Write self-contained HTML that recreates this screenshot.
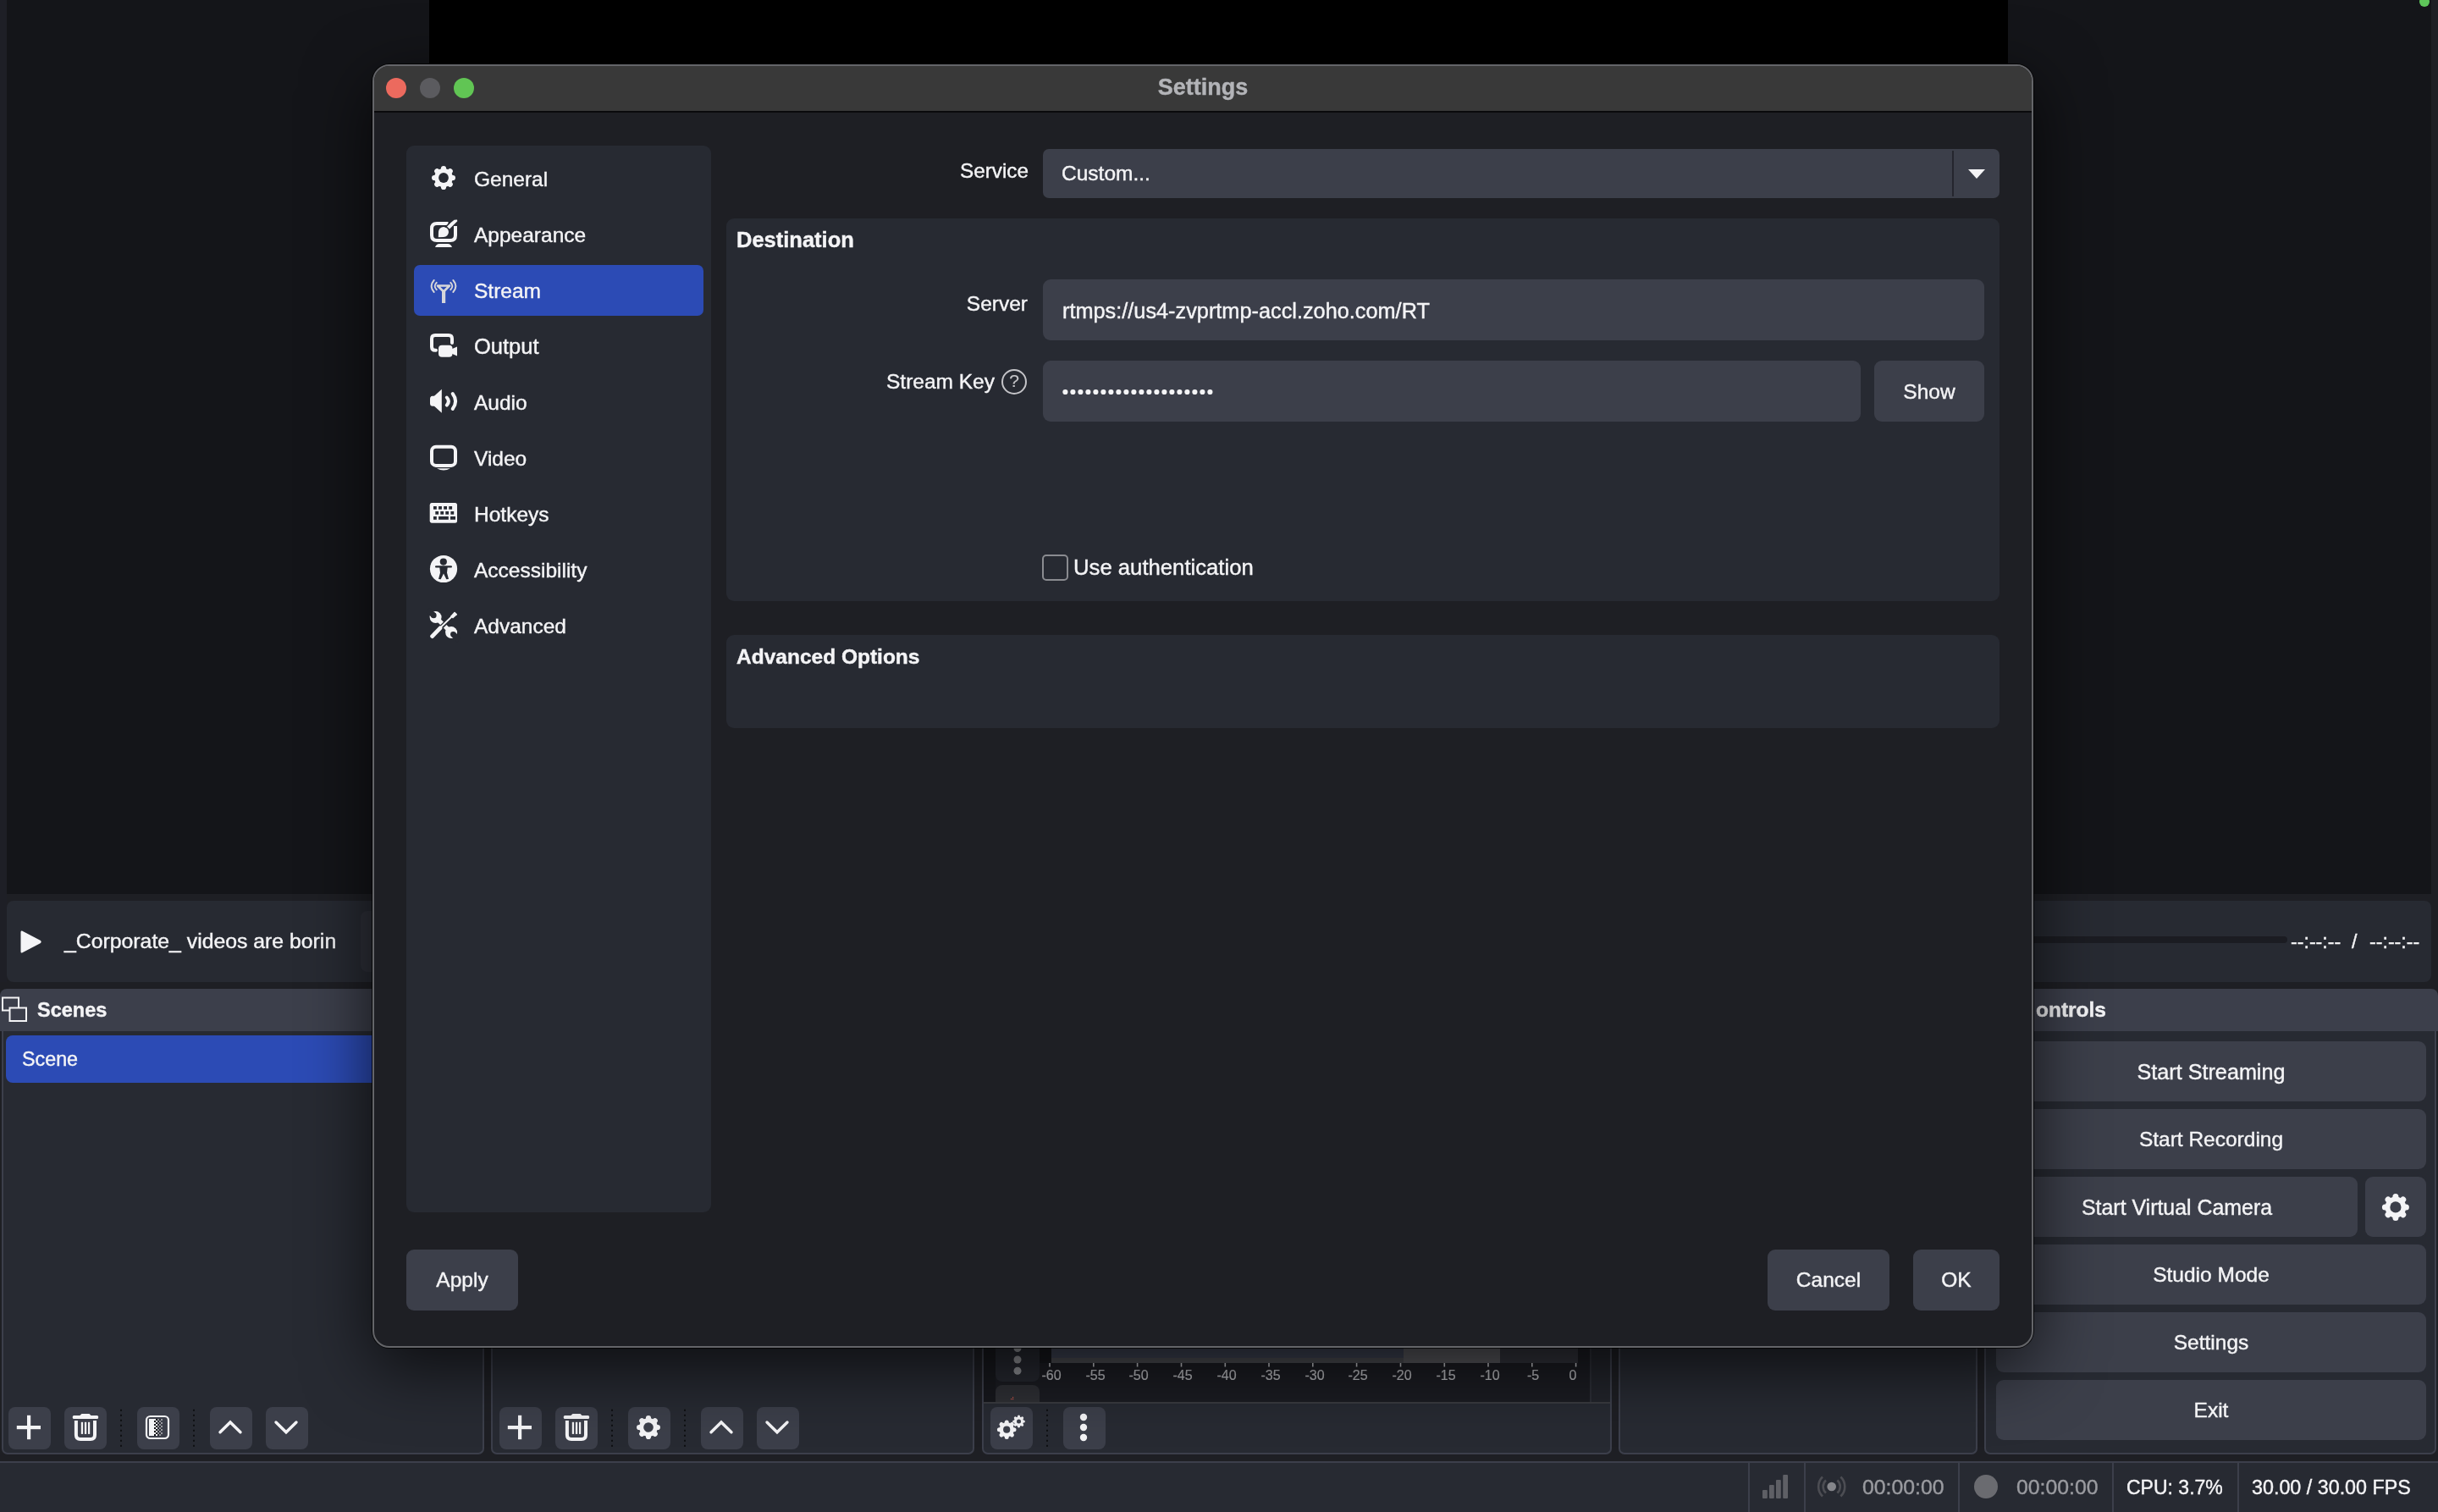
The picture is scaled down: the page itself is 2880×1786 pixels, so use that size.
<!DOCTYPE html>
<html><head><meta charset="utf-8">
<style>
html,body{margin:0;padding:0}
body{width:2880px;height:1786px;overflow:hidden;position:relative;background:#1e1f24;font-family:"Liberation Sans",sans-serif;color:#f4f4f6}
.a{position:absolute;box-sizing:border-box}
.t{position:absolute;white-space:pre;line-height:1;font-size:24.5px;-webkit-text-stroke:0.4px currentColor;will-change:transform}
.b{font-weight:bold}
.btn{position:absolute;background:#3c3f4a;border-radius:9px}
.tb{position:absolute;background:#3c3f4a;border-radius:8px;width:50px;height:50px}
svg{position:absolute;overflow:visible}
</style></head><body>

<!-- ============ BACKGROUND OBS WINDOW ============ -->
<div class="a" style="left:0;top:0;width:8px;height:1160px;background:#1e1f26"></div>
<div class="a" style="left:8px;top:0;width:2864px;height:1056px;background:#141519"></div>
<div class="a" style="left:507px;top:0;width:1865px;height:600px;background:#000"></div>
<div class="a" style="left:2864px;top:0;width:8px;height:10px"><div class="a" style="left:-6px;top:-4px;width:12px;height:12px;border-radius:50%;background:#5ec55a"></div></div>

<!-- media bar -->
<div class="a" style="left:8px;top:1064px;width:2864px;height:96px;background:#272a32;border-radius:8px"></div>
<svg style="left:24px;top:1098px" width="26" height="29" viewBox="0 0 26 29"><path d="M2 1.5 L24 13 Q25.5 14.5 24 16 L2 27.5 Q0.5 28 0.5 26 L0.5 3 Q0.5 1 2 1.5Z" fill="#f4f4f6"/></svg>
<div class="t" style="left:75.5px;top:1100px;font-size:24.8px">_Corporate_ videos are borin</div>
<div class="a" style="left:2300px;top:1106px;width:402px;height:8px;background:#1b1c22;border-radius:4px"></div>
<div class="a" style="left:426px;top:1076px;width:120px;height:72px;background:#2e3039;border-radius:8px"></div>
<div class="t" style="left:2706px;top:1101px;font-size:23.2px">--:--:--</div><div class="t" style="left:2777.5px;top:1101px;font-size:23.2px">/</div><div class="t" style="left:2799px;top:1101px;font-size:23.2px">--:--:--</div>

<!-- Scenes dock -->
<div class="a" style="left:0;top:1168px;width:572px;height:50px;background:#3c3f4b;border-radius:8px 8px 0 0"></div>
<div class="a" style="left:2px;top:1218px;width:570px;height:500px;background:#272a32;border:2px solid #3c3f4b;border-top:none;border-radius:0 0 7px 7px"></div>
<svg style="left:1px;top:1176px" width="32" height="32" viewBox="0 0 32 32"><rect x="2" y="2.5" width="19" height="15" fill="none" stroke="#f4f4f6" stroke-width="2"/><rect x="10.5" y="14.5" width="19.5" height="15.5" fill="#3c3f4b" stroke="#f4f4f6" stroke-width="2"/></svg>
<div class="t b" style="left:44px;top:1182px;font-size:23.5px">Scenes</div>
<div class="a" style="left:7px;top:1223px;width:565px;height:56px;background:#2c4bb5;border-radius:8px 0 0 8px"></div>
<div class="t" style="left:26px;top:1240px;font-size:23.3px">Scene</div>

<!-- scenes toolbar -->
<div class="tb" style="left:10px;top:1662px"></div>
<div class="tb" style="left:76px;top:1662px"></div>
<div class="tb" style="left:162px;top:1662px"></div>
<div class="tb" style="left:248px;top:1662px"></div>
<div class="tb" style="left:314px;top:1662px"></div>

<!-- Sources dock -->
<div class="a" style="left:580px;top:1218px;width:571px;height:500px;background:#272a32;border:2px solid #3c3f4b;border-top:none;border-radius:0 0 7px 7px"></div>
<div class="tb" style="left:590px;top:1662px"></div>
<div class="tb" style="left:656px;top:1662px"></div>
<div class="tb" style="left:742px;top:1662px"></div>
<div class="tb" style="left:828px;top:1662px"></div>
<div class="tb" style="left:894px;top:1662px"></div>

<!-- Mixer dock -->
<div class="a" style="left:1160px;top:1218px;width:744px;height:500px;background:#272a32;border:2px solid #3c3f4b;border-top:none;border-radius:0 0 7px 7px"></div>
<div class="tb" style="left:1170px;top:1662px"></div>
<div class="tb" style="left:1256px;top:1662px"></div>


<!-- mixer top -->
<div class="a" style="left:1162px;top:1300px;width:716px;height:356px;background:#1b1c22"></div>
<div class="a" style="left:1878px;top:1300px;width:24px;height:356px;background:#22242b;border-left:2px solid #2c2e36"></div>
<div class="a" style="left:1162px;top:1300px;width:14px;height:356px;background:#17181d"></div>
<div class="a" style="left:1176px;top:1300px;width:52px;height:332px;background:#25272f;border-radius:8px"></div>
<div class="a" style="left:1176px;top:1636px;width:52px;height:20px;background:#2e2f34;border-radius:8px 8px 0 0"></div>
<div class="a" style="left:1228px;top:1300px;width:14px;height:310px;background:#16171c"></div>
<div class="a" style="left:1242px;top:1300px;width:416px;height:304px;background:#3d4252"></div>
<div class="a" style="left:1242px;top:1604px;width:416px;height:6px;background:#4a4b50"></div>
<div class="a" style="left:1658px;top:1300px;width:114px;height:310px;background:#58585d"></div>
<div class="a" style="left:1772px;top:1300px;width:92px;height:310px;background:#32333b"></div>
<div class="a" style="left:1162px;top:1656px;width:740px;height:2px;background:#3a3b40"></div>
<svg style="left:0;top:0" width="2880" height="1786" viewBox="0 0 2880 1786">
 <g fill="#c0c1c5"><rect x="1239.2" y="1610" width="1.6" height="4.5"/><rect x="1291.0" y="1610" width="1.6" height="4.5"/><rect x="1342.8" y="1610" width="1.6" height="4.5"/><rect x="1394.7" y="1610" width="1.6" height="4.5"/><rect x="1446.5" y="1610" width="1.6" height="4.5"/><rect x="1498.2" y="1610" width="1.6" height="4.5"/><rect x="1550.0" y="1610" width="1.6" height="4.5"/><rect x="1601.8" y="1610" width="1.6" height="4.5"/><rect x="1653.7" y="1610" width="1.6" height="4.5"/><rect x="1705.5" y="1610" width="1.6" height="4.5"/><rect x="1757.2" y="1610" width="1.6" height="4.5"/><rect x="1809.0" y="1610" width="1.6" height="4.5"/><rect x="1860.8" y="1610" width="1.6" height="4.5"/></g>
 <circle cx="1202" cy="1592.5" r="4.5" fill="#8e8f94"/><circle cx="1202" cy="1606" r="4.5" fill="#8e8f94"/><circle cx="1202" cy="1619.2" r="4.5" fill="#8e8f94"/>
 <g fill="#d0584c"><rect x="1194" y="1652" width="1.2" height="1.2"/><rect x="1196" y="1650" width="1.2" height="1.2"/><rect x="1196" y="1652" width="1.2" height="1.2"/></g>
</svg>


<div class="t" style="left:1211.8px;top:1617px;width:60px;text-align:center;font-size:16px;color:#b8b9bd;-webkit-text-stroke:0.2px #b8b9bd">-60</div><div class="t" style="left:1263.6px;top:1617px;width:60px;text-align:center;font-size:16px;color:#b8b9bd;-webkit-text-stroke:0.2px #b8b9bd">-55</div><div class="t" style="left:1315.4px;top:1617px;width:60px;text-align:center;font-size:16px;color:#b8b9bd;-webkit-text-stroke:0.2px #b8b9bd">-50</div><div class="t" style="left:1367.2px;top:1617px;width:60px;text-align:center;font-size:16px;color:#b8b9bd;-webkit-text-stroke:0.2px #b8b9bd">-45</div><div class="t" style="left:1419.0px;top:1617px;width:60px;text-align:center;font-size:16px;color:#b8b9bd;-webkit-text-stroke:0.2px #b8b9bd">-40</div><div class="t" style="left:1470.8px;top:1617px;width:60px;text-align:center;font-size:16px;color:#b8b9bd;-webkit-text-stroke:0.2px #b8b9bd">-35</div><div class="t" style="left:1522.6px;top:1617px;width:60px;text-align:center;font-size:16px;color:#b8b9bd;-webkit-text-stroke:0.2px #b8b9bd">-30</div><div class="t" style="left:1574.4px;top:1617px;width:60px;text-align:center;font-size:16px;color:#b8b9bd;-webkit-text-stroke:0.2px #b8b9bd">-25</div><div class="t" style="left:1626.2px;top:1617px;width:60px;text-align:center;font-size:16px;color:#b8b9bd;-webkit-text-stroke:0.2px #b8b9bd">-20</div><div class="t" style="left:1678.0px;top:1617px;width:60px;text-align:center;font-size:16px;color:#b8b9bd;-webkit-text-stroke:0.2px #b8b9bd">-15</div><div class="t" style="left:1729.8px;top:1617px;width:60px;text-align:center;font-size:16px;color:#b8b9bd;-webkit-text-stroke:0.2px #b8b9bd">-10</div><div class="t" style="left:1780.6px;top:1617px;width:60px;text-align:center;font-size:16px;color:#b8b9bd;-webkit-text-stroke:0.2px #b8b9bd">-5</div><div class="t" style="left:1828.1px;top:1617px;width:60px;text-align:center;font-size:16px;color:#b8b9bd;-webkit-text-stroke:0.2px #b8b9bd">0</div>
<!-- Transitions dock -->
<div class="a" style="left:1912px;top:1218px;width:424px;height:500px;background:#272a32;border:2px solid #3c3f4b;border-top:none;border-radius:0 0 7px 7px"></div>

<!-- Controls dock -->
<div class="a" style="left:2344px;top:1168px;width:536px;height:50px;background:#3c3f4b;border-radius:8px 8px 0 0"></div>
<div class="a" style="left:2344px;top:1218px;width:534px;height:500px;background:#272a32;border:2px solid #3c3f4b;border-top:none;border-radius:0 0 7px 7px"></div>
<div class="t b" style="left:2300px;top:1181px;font-size:24.5px;width:188px;text-align:right">ontrols</div>
<div class="btn" style="left:2358px;top:1230px;width:508px;height:71px"></div>
<div class="btn" style="left:2358px;top:1310px;width:508px;height:71px"></div>
<div class="btn" style="left:2358px;top:1390px;width:427px;height:71px"></div>
<div class="btn" style="left:2794px;top:1390px;width:72px;height:71px"></div>
<div class="btn" style="left:2358px;top:1470px;width:508px;height:71px"></div>
<div class="btn" style="left:2358px;top:1550px;width:508px;height:71px"></div>
<div class="btn" style="left:2358px;top:1630px;width:508px;height:71px"></div>
<div class="t" style="left:2358px;top:1254px;width:508px;text-align:center;font-size:25.2px">Start Streaming</div>
<div class="t" style="left:2358px;top:1334px;width:508px;text-align:center">Start Recording</div>
<div class="t" style="left:2358px;top:1414px;width:427px;text-align:center;font-size:24.9px">Start Virtual Camera</div>
<div class="t" style="left:2358px;top:1494px;width:508px;text-align:center">Studio Mode</div>
<div class="t" style="left:2358px;top:1574px;width:508px;text-align:center">Settings</div>
<div class="t" style="left:2358px;top:1654px;width:508px;text-align:center">Exit</div>

<!-- status bar -->
<div class="a" style="left:0;top:1726px;width:2880px;height:60px;background:#272a32;border-top:2px solid #3c3f4b"></div>
<div class="a" style="left:2064.5px;top:1728px;width:2px;height:58px;background:#3c3f4b"></div>
<div class="a" style="left:2131px;top:1728px;width:2px;height:58px;background:#3c3f4b"></div>
<div class="a" style="left:2313px;top:1728px;width:2px;height:58px;background:#3c3f4b"></div>
<div class="a" style="left:2495px;top:1728px;width:2px;height:58px;background:#3c3f4b"></div>
<div class="a" style="left:2643px;top:1728px;width:2px;height:58px;background:#3c3f4b"></div>
<div class="t" style="left:2199.5px;top:1745px;font-size:24.8px;color:#9a9ba0">00:00:00</div>
<div class="a" style="left:2332px;top:1742px;width:28px;height:28px;border-radius:50%;background:#6a6b70"></div>
<div class="t" style="left:2382px;top:1745px;font-size:24.8px;color:#9a9ba0">00:00:00</div>
<div class="t" style="left:2512px;top:1746px;font-size:23px">CPU: 3.7%</div>
<div class="t" style="left:2660px;top:1746px;font-size:23.3px">30.00 / 30.00 FPS</div>


<svg style="left:0;top:0" width="2880" height="1786" viewBox="0 0 2880 1786">
 <g fill="#f4f4f6">
  <rect x="19.8" y="1684" width="28.2" height="4.2"/><rect x="32" y="1671.8" width="4.2" height="28.4"/><rect x="85.8" y="1672" width="30.3" height="4.1" rx="1.5"/><path d="M93.8,1672.5 L96.5,1670 L105.5,1670 L108,1672.5Z"/><path d="M89.9,1678 L89.9,1695 Q89.9,1700 94.9,1700 L107,1700 Q112,1700 112,1695 L112,1678" fill="none" stroke="#f4f4f6" stroke-width="4"/><rect x="95.8" y="1679.8" width="2.3" height="14.1"/><rect x="99.9" y="1679.8" width="2.3" height="14.1"/><rect x="104" y="1679.8" width="2.2" height="14.1"/><path d="M260,1691.8 L272,1680 L284,1691.8" fill="none" stroke="#f4f4f6" stroke-width="3.4" stroke-linecap="round"/><path d="M326,1680 L338,1691.8 L350,1680" fill="none" stroke="#f4f4f6" stroke-width="3.4" stroke-linecap="round"/>
  <rect x="173" y="1673" width="26" height="26" rx="4.5" fill="none" stroke="#f4f4f6" stroke-width="2.2"/><rect x="176" y="1676" width="6" height="20"/><rect x="182" y="1676" width="2" height="2" fill="#f4f4f6"/><rect x="182" y="1678" width="2" height="2" fill="#101116"/><rect x="182" y="1680" width="2" height="2" fill="#f4f4f6"/><rect x="182" y="1682" width="2" height="2" fill="#101116"/><rect x="182" y="1684" width="2" height="2" fill="#f4f4f6"/><rect x="182" y="1686" width="2" height="2" fill="#101116"/><rect x="182" y="1688" width="2" height="2" fill="#f4f4f6"/><rect x="182" y="1690" width="2" height="2" fill="#101116"/><rect x="182" y="1692" width="2" height="2" fill="#f4f4f6"/><rect x="182" y="1694" width="2" height="2" fill="#101116"/><rect x="184" y="1676" width="2" height="2" fill="#101116"/><rect x="184" y="1678" width="2" height="2" fill="#f4f4f6"/><rect x="184" y="1680" width="2" height="2" fill="#101116"/><rect x="184" y="1682" width="2" height="2" fill="#f4f4f6"/><rect x="184" y="1684" width="2" height="2" fill="#101116"/><rect x="184" y="1686" width="2" height="2" fill="#f4f4f6"/><rect x="184" y="1688" width="2" height="2" fill="#101116"/><rect x="184" y="1690" width="2" height="2" fill="#f4f4f6"/><rect x="184" y="1692" width="2" height="2" fill="#101116"/><rect x="184" y="1694" width="2" height="2" fill="#f4f4f6"/><rect x="186" y="1676" width="2" height="2" fill="#8e8f94"/><rect x="186" y="1678" width="2" height="2" fill="#2a2c36"/><rect x="186" y="1680" width="2" height="2" fill="#8e8f94"/><rect x="186" y="1682" width="2" height="2" fill="#2a2c36"/><rect x="186" y="1684" width="2" height="2" fill="#8e8f94"/><rect x="186" y="1686" width="2" height="2" fill="#2a2c36"/><rect x="186" y="1688" width="2" height="2" fill="#8e8f94"/><rect x="186" y="1690" width="2" height="2" fill="#2a2c36"/><rect x="186" y="1692" width="2" height="2" fill="#8e8f94"/><rect x="186" y="1694" width="2" height="2" fill="#2a2c36"/><rect x="188" y="1676" width="2" height="2" fill="#2a2c36"/><rect x="188" y="1678" width="2" height="2" fill="#8e8f94"/><rect x="188" y="1680" width="2" height="2" fill="#2a2c36"/><rect x="188" y="1682" width="2" height="2" fill="#8e8f94"/><rect x="188" y="1684" width="2" height="2" fill="#2a2c36"/><rect x="188" y="1686" width="2" height="2" fill="#8e8f94"/><rect x="188" y="1688" width="2" height="2" fill="#2a2c36"/><rect x="188" y="1690" width="2" height="2" fill="#8e8f94"/><rect x="188" y="1692" width="2" height="2" fill="#2a2c36"/><rect x="188" y="1694" width="2" height="2" fill="#8e8f94"/><rect x="190" y="1676" width="2" height="2" fill="#9a9ba0"/><rect x="190" y="1680" width="2" height="2" fill="#9a9ba0"/><rect x="190" y="1684" width="2" height="2" fill="#9a9ba0"/><rect x="190" y="1688" width="2" height="2" fill="#9a9ba0"/><rect x="190" y="1692" width="2" height="2" fill="#9a9ba0"/>
  <rect x="599.8" y="1684" width="28.2" height="4.2"/><rect x="612" y="1671.8" width="4.2" height="28.4"/><rect x="665.8" y="1672" width="30.3" height="4.1" rx="1.5"/><path d="M673.8,1672.5 L676.5,1670 L685.5,1670 L688,1672.5Z"/><path d="M669.9,1678 L669.9,1695 Q669.9,1700 674.9,1700 L687,1700 Q692,1700 692,1695 L692,1678" fill="none" stroke="#f4f4f6" stroke-width="4"/><rect x="675.8" y="1679.8" width="2.3" height="14.1"/><rect x="679.9" y="1679.8" width="2.3" height="14.1"/><rect x="684" y="1679.8" width="2.2" height="14.1"/><path d="M840,1691.8 L852,1680 L864,1691.8" fill="none" stroke="#f4f4f6" stroke-width="3.4" stroke-linecap="round"/><path d="M906,1680 L918,1691.8 L930,1680" fill="none" stroke="#f4f4f6" stroke-width="3.4" stroke-linecap="round"/>
  <circle cx="766" cy="1686" r="10.9" fill="#f4f4f6"/><path d="M766.00,1686.00 L766.00,1675.10 M766.00,1686.00 L773.71,1678.29 M766.00,1686.00 L776.90,1686.00 M766.00,1686.00 L773.71,1693.71 M766.00,1686.00 L766.00,1696.90 M766.00,1686.00 L758.29,1693.71 M766.00,1686.00 L755.10,1686.00 M766.00,1686.00 L758.29,1678.29 " stroke="#f4f4f6" stroke-width="6.2" stroke-linecap="round" fill="none"/><circle cx="766" cy="1686" r="5.8" fill="#3c3f4a"/>
  <circle cx="1189.2" cy="1688.7" r="8.7" fill="#f4f4f6"/><path d="M1189.20,1688.70 L1189.20,1679.90 M1189.20,1688.70 L1195.42,1682.48 M1189.20,1688.70 L1198.00,1688.70 M1189.20,1688.70 L1195.42,1694.92 M1189.20,1688.70 L1189.20,1697.50 M1189.20,1688.70 L1182.98,1694.92 M1189.20,1688.70 L1180.40,1688.70 M1189.20,1688.70 L1182.98,1682.48 " stroke="#f4f4f6" stroke-width="5" stroke-linecap="round" fill="none"/><circle cx="1189.2" cy="1688.7" r="4.1" fill="#3c3f4a"/>
  <circle cx="1203.5" cy="1679" r="5.6" fill="#f4f4f6"/><path d="M1203.50,1679.00 L1203.50,1673.20 M1203.50,1679.00 L1207.60,1674.90 M1203.50,1679.00 L1209.30,1679.00 M1203.50,1679.00 L1207.60,1683.10 M1203.50,1679.00 L1203.50,1684.80 M1203.50,1679.00 L1199.40,1683.10 M1203.50,1679.00 L1197.70,1679.00 M1203.50,1679.00 L1199.40,1674.90 " stroke="#f4f4f6" stroke-width="3.2" stroke-linecap="round" fill="none"/><circle cx="1203.5" cy="1679" r="2.5" fill="#3c3f4a"/>
  <circle cx="1280" cy="1674" r="4.2"/><circle cx="1280" cy="1686" r="4.2"/><circle cx="1280" cy="1698" r="4.2"/>
  <circle cx="2829.9" cy="1425.9" r="12.4" fill="#f4f4f6"/><path d="M2829.90,1425.90 L2829.90,1413.40 M2829.90,1425.90 L2838.74,1417.06 M2829.90,1425.90 L2842.40,1425.90 M2829.90,1425.90 L2838.74,1434.74 M2829.90,1425.90 L2829.90,1438.40 M2829.90,1425.90 L2821.06,1434.74 M2829.90,1425.90 L2817.40,1425.90 M2829.90,1425.90 L2821.06,1417.06 " stroke="#f4f4f6" stroke-width="7" stroke-linecap="round" fill="none"/><circle cx="2829.9" cy="1425.9" r="6.6" fill="#3c3f4a"/>
 </g>
 <g fill="#0e0f12"><rect x="142" y="1664.8" width="2" height="2"/><rect x="142" y="1670.8" width="2" height="2"/><rect x="142" y="1676.8" width="2" height="2"/><rect x="142" y="1682.8" width="2" height="2"/><rect x="142" y="1688.8" width="2" height="2"/><rect x="142" y="1694.8" width="2" height="2"/><rect x="142" y="1700.8" width="2" height="2"/><rect x="142" y="1706.8" width="2" height="2"/><rect x="228" y="1664.8" width="2" height="2"/><rect x="228" y="1670.8" width="2" height="2"/><rect x="228" y="1676.8" width="2" height="2"/><rect x="228" y="1682.8" width="2" height="2"/><rect x="228" y="1688.8" width="2" height="2"/><rect x="228" y="1694.8" width="2" height="2"/><rect x="228" y="1700.8" width="2" height="2"/><rect x="228" y="1706.8" width="2" height="2"/><rect x="722" y="1664.8" width="2" height="2"/><rect x="722" y="1670.8" width="2" height="2"/><rect x="722" y="1676.8" width="2" height="2"/><rect x="722" y="1682.8" width="2" height="2"/><rect x="722" y="1688.8" width="2" height="2"/><rect x="722" y="1694.8" width="2" height="2"/><rect x="722" y="1700.8" width="2" height="2"/><rect x="722" y="1706.8" width="2" height="2"/><rect x="808" y="1664.8" width="2" height="2"/><rect x="808" y="1670.8" width="2" height="2"/><rect x="808" y="1676.8" width="2" height="2"/><rect x="808" y="1682.8" width="2" height="2"/><rect x="808" y="1688.8" width="2" height="2"/><rect x="808" y="1694.8" width="2" height="2"/><rect x="808" y="1700.8" width="2" height="2"/><rect x="808" y="1706.8" width="2" height="2"/><rect x="1236" y="1664.8" width="2" height="2"/><rect x="1236" y="1670.8" width="2" height="2"/><rect x="1236" y="1676.8" width="2" height="2"/><rect x="1236" y="1682.8" width="2" height="2"/><rect x="1236" y="1688.8" width="2" height="2"/><rect x="1236" y="1694.8" width="2" height="2"/><rect x="1236" y="1700.8" width="2" height="2"/><rect x="1236" y="1706.8" width="2" height="2"/></g>
 <!-- status bar icons -->
 <g fill="#5e5f65">
  <rect x="2082" y="1760" width="5.8" height="10" rx="1"/>
  <rect x="2090" y="1754" width="5.8" height="16" rx="1"/>
  <rect x="2098" y="1748" width="5.8" height="22" rx="1"/>
  <rect x="2106.2" y="1742" width="5.8" height="28" rx="1"/>
 </g>
 <circle cx="2163.7" cy="1756" r="5.3" fill="#85868b"/>
 <g fill="none" stroke="#4c4d53" stroke-width="2.6">
  <path d="M2157,1748.5 A10,10 0 0 0 2157,1763.5"/><path d="M2170.4,1748.5 A10,10 0 0 1 2170.4,1763.5"/>
  <path d="M2153,1744.5 A16,16 0 0 0 2153,1767.5"/><path d="M2174.4,1744.5 A16,16 0 0 1 2174.4,1767.5"/>
 </g>
</svg>

<!-- ============ SETTINGS DIALOG ============ -->
<div class="a" style="left:440px;top:76px;width:1962px;height:1516px;border-radius:20px;background:#1e1f24;border:2px solid #646569;box-shadow:0 0 0 1px rgba(0,0,0,0.75),0 22px 80px 0 rgba(0,0,0,0.7);overflow:hidden">
  <div class="a" style="left:0;top:0;width:1958px;height:55px;background:#393939;border-bottom:2px solid #0a0a0c"></div>
</div>
<div class="a" style="left:456px;top:92px;width:24px;height:24px;border-radius:50%;background:#ec6a5e"></div>
<div class="a" style="left:496px;top:92px;width:24px;height:24px;border-radius:50%;background:#5b5b5f"></div>
<div class="a" style="left:536px;top:92px;width:24px;height:24px;border-radius:50%;background:#61c554"></div>
<div class="t b" style="left:440px;top:90px;width:1962px;text-align:center;font-size:27px;color:#b3b4b8">Settings</div>

<!-- left list -->
<div class="a" style="left:480px;top:172px;width:360px;height:1260px;background:#272a32;border-radius:9px"></div>
<div class="a" style="left:489px;top:313px;width:342px;height:60px;background:#2c4bb5;border-radius:7px"></div>
<div class="t" style="left:560px;top:200px">General</div>
<div class="t" style="left:560px;top:266px">Appearance</div>
<div class="t" style="left:560px;top:332px">Stream</div>
<div class="t" style="left:560px;top:397px;font-size:25.5px;top:396.5px">Output</div>
<div class="t" style="left:560px;top:464px">Audio</div>
<div class="t" style="left:560px;top:530px">Video</div>
<div class="t" style="left:560px;top:596px">Hotkeys</div>
<div class="t" style="left:560px;top:662px">Accessibility</div>
<div class="t" style="left:560px;top:728px">Advanced</div>

<!-- right content -->
<div class="t" style="left:1000px;top:190px;width:215px;text-align:right;font-size:24.3px">Service</div>
<div class="a" style="left:1232px;top:176px;width:1130px;height:58px;background:#3c3f4a;border-radius:7px"></div>
<div class="a" style="left:2306px;top:178px;width:2px;height:54px;background:#25262e"></div>
<svg style="left:2325px;top:200px" width="20" height="12" viewBox="0 0 20 12"><path d="M0 0 L20 0 L10 11Z" fill="#f4f4f6"/></svg>
<div class="t" style="left:1254px;top:193px">Custom...</div>

<div class="a" style="left:858px;top:258px;width:1504px;height:452px;background:#272a32;border-radius:9px"></div>
<div class="t b" style="left:870px;top:270.5px;font-size:25.5px">Destination</div>
<div class="t" style="left:1000px;top:347px;width:214px;text-align:right">Server</div>
<div class="a" style="left:1232px;top:330px;width:1112px;height:72px;background:#3c3f4a;border-radius:9px"></div>
<div class="t" style="left:1254.5px;top:354.5px;font-size:25.3px">rtmps://us4-zvprtmp-accl.zoho.com/RT</div>
<div class="t" style="left:960px;top:439px;width:215px;text-align:right">Stream Key</div>
<div class="a" style="left:1183px;top:436px;width:30px;height:30px;border-radius:50%;border:2px solid #c4c4c8"></div>
<div class="t" style="left:1183px;top:439px;width:30px;text-align:center;font-size:21px;color:#c4c4c8;-webkit-text-stroke:0.2px #c4c4c8">?</div>
<div class="a" style="left:1232px;top:426px;width:966px;height:72px;background:#3c3f4a;border-radius:9px"></div>
<div class="a" style="left:2214px;top:426px;width:130px;height:72px;background:#3c3f4a;border-radius:9px"></div>
<div class="t" style="left:2214px;top:451px;width:130px;text-align:center">Show</div>
<div class="a" style="left:1231px;top:655px;width:31px;height:31px;border:2px solid #8a8b90;border-radius:5px"></div>
<div class="t" style="left:1268px;top:658px;font-size:25.7px">Use authentication</div>

<div class="a" style="left:858px;top:750px;width:1504px;height:110px;background:#272a32;border-radius:9px"></div>
<div class="t b" style="left:870px;top:764px">Advanced Options</div>

<div class="a" style="left:480px;top:1476px;width:132px;height:72px;background:#3c3f4a;border-radius:9px"></div>
<div class="t" style="left:480px;top:1500px;width:132px;text-align:center">Apply</div>
<div class="a" style="left:2088px;top:1476px;width:144px;height:72px;background:#3c3f4a;border-radius:9px"></div>
<div class="t" style="left:2088px;top:1500px;width:144px;text-align:center">Cancel</div>
<div class="a" style="left:2260px;top:1476px;width:102px;height:72px;background:#3c3f4a;border-radius:9px"></div>
<div class="t" style="left:2260px;top:1500px;width:102px;text-align:center">OK</div>


<svg style="left:0;top:0" width="2880" height="1786" viewBox="0 0 2880 1786">
 <g fill="#f4f4f6">
  <circle cx="524" cy="210" r="10.9" fill="#f4f4f6"/><path d="M524.00,210.00 L524.00,199.10 M524.00,210.00 L531.71,202.29 M524.00,210.00 L534.90,210.00 M524.00,210.00 L531.71,217.71 M524.00,210.00 L524.00,220.90 M524.00,210.00 L516.29,217.71 M524.00,210.00 L513.10,210.00 M524.00,210.00 L516.29,202.29 " stroke="#f4f4f6" stroke-width="6.2" stroke-linecap="round" fill="none"/><circle cx="524" cy="210" r="5.9" fill="#272a32"/>
  <!-- appearance -->
  <path d="M529.5,264 L516,264 Q510,264 510,270 L510,278 Q510,284 516,284 L532,284 Q538,284 538,278 L538,267" fill="none" stroke="#f4f4f6" stroke-width="4"/>
  <path d="M514,292 Q515.5,288 519,288 L529,288 Q532.5,288 534,292Z"/>
  <path d="M517.8,280.3 L518,274 A6,6 0 1 1 524,280Z"/>
  <path d="M527.5,267 L531,270.5 L540.3,261.2 L540,259.6 L536.6,259.8Z"/>
  <path d="M526,268.5 L531.5,263" stroke="#272a32" stroke-width="1.6"/>
  <!-- output -->
  <path d="M515,413.8 L514,413.8 Q510,413.8 510,409.8 L510,400 Q510,396 514,396 L530,396 Q534,396 534,400 L534,405" fill="none" stroke="#f4f4f6" stroke-width="4" stroke-linecap="round"/>
  <rect x="518" y="407.8" width="16.5" height="14" rx="4"/>
  <path d="M532,413 L540,409.5 L540,420.5 L532,417Z"/>
  <!-- audio -->
  <rect x="508" y="467.8" width="9" height="12" rx="3"/>
  <path d="M513,467.8 L521.8,459.8 L521.8,487.8 L513,479.8Z"/>
  <path d="M527.8,469.5 Q532,474 527.8,478.6" fill="none" stroke="#f4f4f6" stroke-width="4" stroke-linecap="round"/>
  <path d="M534.7,465 Q541.5,474 534.7,483" fill="none" stroke="#f4f4f6" stroke-width="4" stroke-linecap="round"/>
  <!-- video -->
  <rect x="510" y="527.7" width="28" height="22.2" rx="5" fill="none" stroke="#f4f4f6" stroke-width="4"/>
  <path d="M516,553.3 Q524,557.8 532,553.3Z"/>
  <!-- hotkeys -->
  <rect x="507.7" y="594" width="32.3" height="23.7" rx="2.5"/>
  <g fill="#272a32">
   <rect x="512" y="598" width="3.8" height="3.7"/><rect x="518.1" y="598" width="3.8" height="3.7"/><rect x="524.2" y="598" width="3.8" height="3.7"/><rect x="530.3" y="598" width="3.8" height="3.7"/>
   <rect x="514.3" y="604" width="3.8" height="3.7"/><rect x="520.3" y="604" width="3.8" height="3.7"/><rect x="526.3" y="604" width="3.8" height="3.7"/><rect x="532.4" y="604" width="3.8" height="3.7"/>
   <rect x="512" y="610" width="3.8" height="3.8"/><rect x="518.1" y="610" width="11.7" height="3.8"/><rect x="532" y="610" width="6" height="3.8"/>
  </g>
  <!-- accessibility -->
  <circle cx="524" cy="672" r="16.1"/>
  <g fill="#272a32">
   <circle cx="523.8" cy="663.6" r="4.1"/>
   <rect x="514" y="668.2" width="20" height="2.3" rx="1.1"/>
   <path d="M519.2,669.5 L528.8,669.5 L528,676.5 L530,684 L527.3,684.2 L524,677.5 L520.7,684.2 L518,684 L520,676.5Z"/>
  </g>
  <!-- advanced -->
  <path d="M514.6,729.1 L533.1,747.1" stroke="#f4f4f6" stroke-width="5"/>
  <circle cx="514.6" cy="729.1" r="7"/>
  <circle cx="533.1" cy="747.1" r="7"/>
  <g fill="#272a32" stroke="#272a32">
   <circle cx="512.3" cy="726.9" r="3.3" stroke="none"/>
   <path d="M512.3,726.9 L505.5,720.3" stroke-width="6.6"/>
   <circle cx="535.4" cy="749.3" r="3.3" stroke="none"/>
   <path d="M535.4,749.3 L542.2,755.9" stroke-width="6.6"/>
   <path d="M507,755 L541,721" stroke-width="5"/>
  </g>
  <path d="M510.6,751.6 L520,741.8" stroke="#f4f4f6" stroke-width="4.8" stroke-linecap="round"/>
  <path d="M519,742.5 L533.5,728.5" stroke="#f4f4f6" stroke-width="1.9"/>
  <path d="M532,728 L536.5,723 Q537,722.6 537.5,723 L539.8,725.3 Q540.2,725.8 539.8,726.3 L535,730.5Z"/>
 </g>
 <!-- stream -->
 <g fill="none" stroke="#d6d6da" stroke-linecap="round">
  <path d="M512.7,331 Q506.5,338 512.7,345" stroke-width="1.9"/>
  <path d="M515.8,333.8 Q511.5,338 515.8,342.2" stroke-width="1.9"/>
  <path d="M535.3,331 Q541.5,338 535.3,345" stroke-width="1.9"/>
  <path d="M532.2,333.8 Q536.5,338 532.2,342.2" stroke-width="1.9"/>
  <path d="M517,337.5 L531,337.5 L524,344.5Z" stroke-width="2.6" stroke-linejoin="round"/>
 </g>
 <rect x="522" y="343" width="4.2" height="15" fill="#d6d6da"/>
 <!-- stream key dots -->
 <g fill="#f4f4f6"><circle cx="1258.4" cy="463" r="3.1"/><circle cx="1267.4" cy="463" r="3.1"/><circle cx="1276.4" cy="463" r="3.1"/><circle cx="1285.4" cy="463" r="3.1"/><circle cx="1294.4" cy="463" r="3.1"/><circle cx="1303.4" cy="463" r="3.1"/><circle cx="1312.4" cy="463" r="3.1"/><circle cx="1321.4" cy="463" r="3.1"/><circle cx="1330.4" cy="463" r="3.1"/><circle cx="1339.4" cy="463" r="3.1"/><circle cx="1348.4" cy="463" r="3.1"/><circle cx="1357.4" cy="463" r="3.1"/><circle cx="1366.4" cy="463" r="3.1"/><circle cx="1375.4" cy="463" r="3.1"/><circle cx="1384.4" cy="463" r="3.1"/><circle cx="1393.4" cy="463" r="3.1"/><circle cx="1402.4" cy="463" r="3.1"/><circle cx="1411.4" cy="463" r="3.1"/><circle cx="1420.4" cy="463" r="3.1"/><circle cx="1429.4" cy="463" r="3.1"/></g>
</svg>

</body></html>
